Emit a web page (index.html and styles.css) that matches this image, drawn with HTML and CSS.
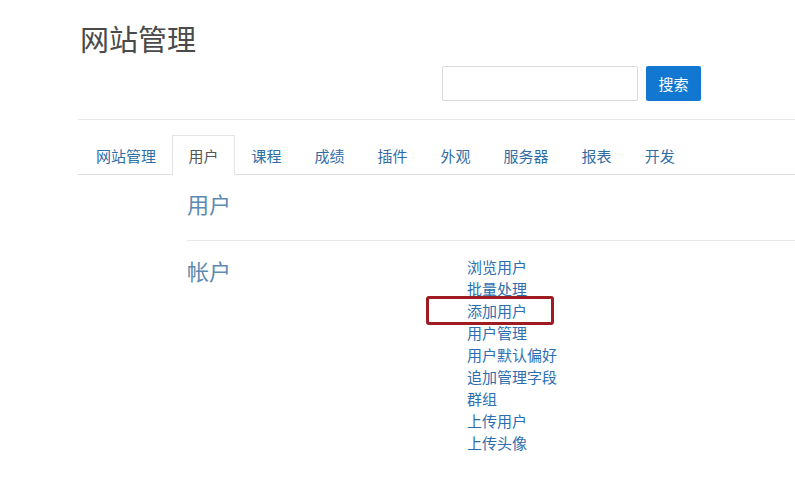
FILE: index.html
```html
<!DOCTYPE html>
<html lang="zh-CN">
<head>
    <meta charset="UTF-8">
    <meta name="viewport" content="width=device-width, initial-scale=1.0">
    <title>网站管理</title>
    <link rel="stylesheet" href="styles.css">
</head>
<body>
    <div class="page">
        <header class="page-header">
            <h1 class="site-title">网站管理</h1>
            <form class="search-row">
                <input type="text" class="search-input">
                <button type="button" class="search-btn">搜索</button>
            </form>
        </header>

        <ul class="tabs">
            <li><a href="#">网站管理</a></li>
            <li class="active"><a href="#">用户</a></li>
            <li><a href="#">课程</a></li>
            <li><a href="#">成绩</a></li>
            <li><a href="#">插件</a></li>
            <li><a href="#">外观</a></li>
            <li><a href="#">服务器</a></li>
            <li><a href="#">报表</a></li>
            <li><a href="#">开发</a></li>
        </ul>

        <div class="tab-content">
            <h2 class="section-title">用户</h2>
            <div class="section-row">
                <h3 class="group-title">帐户</h3>
                <ul class="link-list">
                    <li><a href="#">浏览用户</a></li>
                    <li><a href="#">批量处理</a></li>
                    <li class="marked"><a href="#">添加用户</a></li>
                    <li><a href="#">用户管理</a></li>
                    <li><a href="#">用户默认偏好</a></li>
                    <li><a href="#">追加管理字段</a></li>
                    <li><a href="#">群组</a></li>
                    <li><a href="#">上传用户</a></li>
                    <li><a href="#">上传头像</a></li>
                </ul>
            </div>
        </div>
    </div>
</body>
</html>
```

FILE: styles.css
```css
body {
    margin: 0;
    background-color: #fff;
    font-family: "Noto Sans CJK SC", "Noto Sans", sans-serif;
    color: #555;
}
a {
    text-decoration: none;
}
.page {
    padding-left: 78px;
}
.page-header {
    border-bottom: 1px solid #e6e6e6;
}
.site-title {
    margin: 0;
    padding: 20px 0 0 2px;
    font-size: 29px;
    font-weight: normal;
    line-height: 36px;
    color: #4a4a4a;
}
.search-row {
    display: flex;
    justify-content: flex-end;
    gap: 8px;
    margin: 10px 0 0;
    padding: 0 94px 18px 0;
}
.search-input {
    width: 196px;
    height: 35px;
    box-sizing: border-box;
    border: 1px solid #d9d9d9;
    border-radius: 2px;
    padding: 4px 8px;
}
.search-btn {
    width: 55px;
    height: 35px;
    border: none;
    border-radius: 2px;
    background-color: #1177d1;
    color: #fff;
    font-family: "Noto Sans CJK SC", sans-serif;
    font-size: 15px;
    cursor: pointer;
}
.tabs {
    display: flex;
    list-style: none;
    margin: 15px 0 0;
    padding: 0;
    border-bottom: 1px solid #dedede;
}
.tabs li {
    margin-bottom: -1px;
}
.tabs a {
    display: block;
    padding: 0 15.5px;
    height: 38px;
    line-height: 39px;
    font-size: 15px;
    color: #2f6ea5;
    border: 1px solid transparent;
    border-bottom: none;
}
.tabs li:first-child a {
    padding: 0 15px 0 17px;
}
.tabs .active a {
    color: #555;
    background-color: #fff;
    border-color: #e3e3e3;
    height: 39px;
}
.tab-content {
    padding: 13px 0 0 109px;
}
.section-title {
    margin: 0;
    padding-bottom: 22px;
    font-size: 22px;
    font-weight: normal;
    line-height: 30px;
    color: #5c8ab3;
    border-bottom: 1px solid #e6e6e6;
}
.section-row {
    display: flex;
    padding-top: 14px;
}
.group-title {
    width: 280px;
    margin: 0;
    font-size: 22px;
    font-weight: normal;
    line-height: 30px;
    color: #5c8ab3;
}
.link-list {
    list-style: none;
    margin: 1px 0 0;
    padding: 0;
}
.link-list li {
    font-size: 15px;
    line-height: 22px;
}
.link-list a {
    color: #2d6eb0;
}
.link-list .marked {
    position: relative;
}
.link-list .marked::after {
    content: "";
    position: absolute;
    left: -41px;
    top: -4px;
    width: 128px;
    height: 29px;
    box-sizing: border-box;
    border: 3px solid #9e1b22;
    border-radius: 3px;
}
```
